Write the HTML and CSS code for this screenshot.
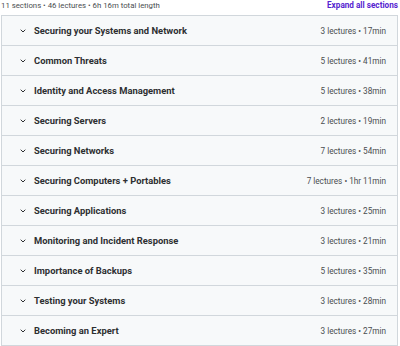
FILE: index.html
```html
<!DOCTYPE html>
<html>
<head>
<meta charset="utf-8">
<link rel="stylesheet" href="styles.css">
</head>
<body>
<div class="summary">
  <span class="stats">11 sections • 46 lectures • 6h 16m total length</span>
  <span class="expand">Expand all sections</span>
</div>
<div class="sections">
  <div class="row"><span class="chev"><svg width="6" height="4" viewBox="0 0 6 4"><path d="M0.7 0.7l2.3 2.3 2.3-2.3" fill="none" stroke="#2d2f31" stroke-width="1"/></svg></span><span class="title">Securing your Systems and Network</span><span class="meta">3 lectures • 17min</span></div>
  <div class="row"><span class="chev"><svg width="6" height="4" viewBox="0 0 6 4"><path d="M0.7 0.7l2.3 2.3 2.3-2.3" fill="none" stroke="#2d2f31" stroke-width="1"/></svg></span><span class="title">Common Threats</span><span class="meta">5 lectures • 41min</span></div>
  <div class="row"><span class="chev"><svg width="6" height="4" viewBox="0 0 6 4"><path d="M0.7 0.7l2.3 2.3 2.3-2.3" fill="none" stroke="#2d2f31" stroke-width="1"/></svg></span><span class="title">Identity and Access Management</span><span class="meta">5 lectures • 38min</span></div>
  <div class="row"><span class="chev"><svg width="6" height="4" viewBox="0 0 6 4"><path d="M0.7 0.7l2.3 2.3 2.3-2.3" fill="none" stroke="#2d2f31" stroke-width="1"/></svg></span><span class="title">Securing Servers</span><span class="meta">2 lectures • 19min</span></div>
  <div class="row"><span class="chev"><svg width="6" height="4" viewBox="0 0 6 4"><path d="M0.7 0.7l2.3 2.3 2.3-2.3" fill="none" stroke="#2d2f31" stroke-width="1"/></svg></span><span class="title">Securing Networks</span><span class="meta">7 lectures • 54min</span></div>
  <div class="row"><span class="chev"><svg width="6" height="4" viewBox="0 0 6 4"><path d="M0.7 0.7l2.3 2.3 2.3-2.3" fill="none" stroke="#2d2f31" stroke-width="1"/></svg></span><span class="title">Securing Computers + Portables</span><span class="meta">7 lectures • 1hr 11min</span></div>
  <div class="row"><span class="chev"><svg width="6" height="4" viewBox="0 0 6 4"><path d="M0.7 0.7l2.3 2.3 2.3-2.3" fill="none" stroke="#2d2f31" stroke-width="1"/></svg></span><span class="title">Securing Applications</span><span class="meta">3 lectures • 25min</span></div>
  <div class="row"><span class="chev"><svg width="6" height="4" viewBox="0 0 6 4"><path d="M0.7 0.7l2.3 2.3 2.3-2.3" fill="none" stroke="#2d2f31" stroke-width="1"/></svg></span><span class="title">Monitoring and Incident Response</span><span class="meta">3 lectures • 21min</span></div>
  <div class="row"><span class="chev"><svg width="6" height="4" viewBox="0 0 6 4"><path d="M0.7 0.7l2.3 2.3 2.3-2.3" fill="none" stroke="#2d2f31" stroke-width="1"/></svg></span><span class="title">Importance of Backups</span><span class="meta">5 lectures • 35min</span></div>
  <div class="row"><span class="chev"><svg width="6" height="4" viewBox="0 0 6 4"><path d="M0.7 0.7l2.3 2.3 2.3-2.3" fill="none" stroke="#2d2f31" stroke-width="1"/></svg></span><span class="title">Testing your Systems</span><span class="meta">3 lectures • 28min</span></div>
  <div class="row"><span class="chev"><svg width="6" height="4" viewBox="0 0 6 4"><path d="M0.7 0.7l2.3 2.3 2.3-2.3" fill="none" stroke="#2d2f31" stroke-width="1"/></svg></span><span class="title">Becoming an Expert</span><span class="meta">3 lectures • 27min</span></div>
</div>
</body>
</html>
```
FILE: styles.css
```css
html, body {
  margin: 0;
  padding: 0;
  background: #ffffff;
  font-family: Roboto, "Noto Sans", sans-serif;
  color: #2d2f31;
}
.summary {
  height: 15px;
  display: flex;
  justify-content: space-between;
  align-items: flex-start;
  padding: 0 2px 0 1px;
  line-height: 11px;
}
.stats {
  color: #4a4d50;
  font-size: 7.8px;
}
.expand {
  color: #5624d0;
  font-weight: 700;
  font-size: 8.2px;
}
.sections {
  margin-left: 1px;
  width: 395px;
  border: 1px solid #d1d7dc;
  border-bottom: none;
}
.row {
  height: 29px;
  display: flex;
  align-items: center;
  background: #f7f9fa;
  border-bottom: 1px solid #d1d7dc;
  padding: 0 11px 0 18px;
}
.chev {
  display: flex;
  width: 14px;
}
.title {
  flex: 1;
  font-weight: 700;
  font-size: 9.4px;
  color: #2d2f31;
}
.meta {
  font-size: 8.2px;
  color: #4a4d50;
}
```
